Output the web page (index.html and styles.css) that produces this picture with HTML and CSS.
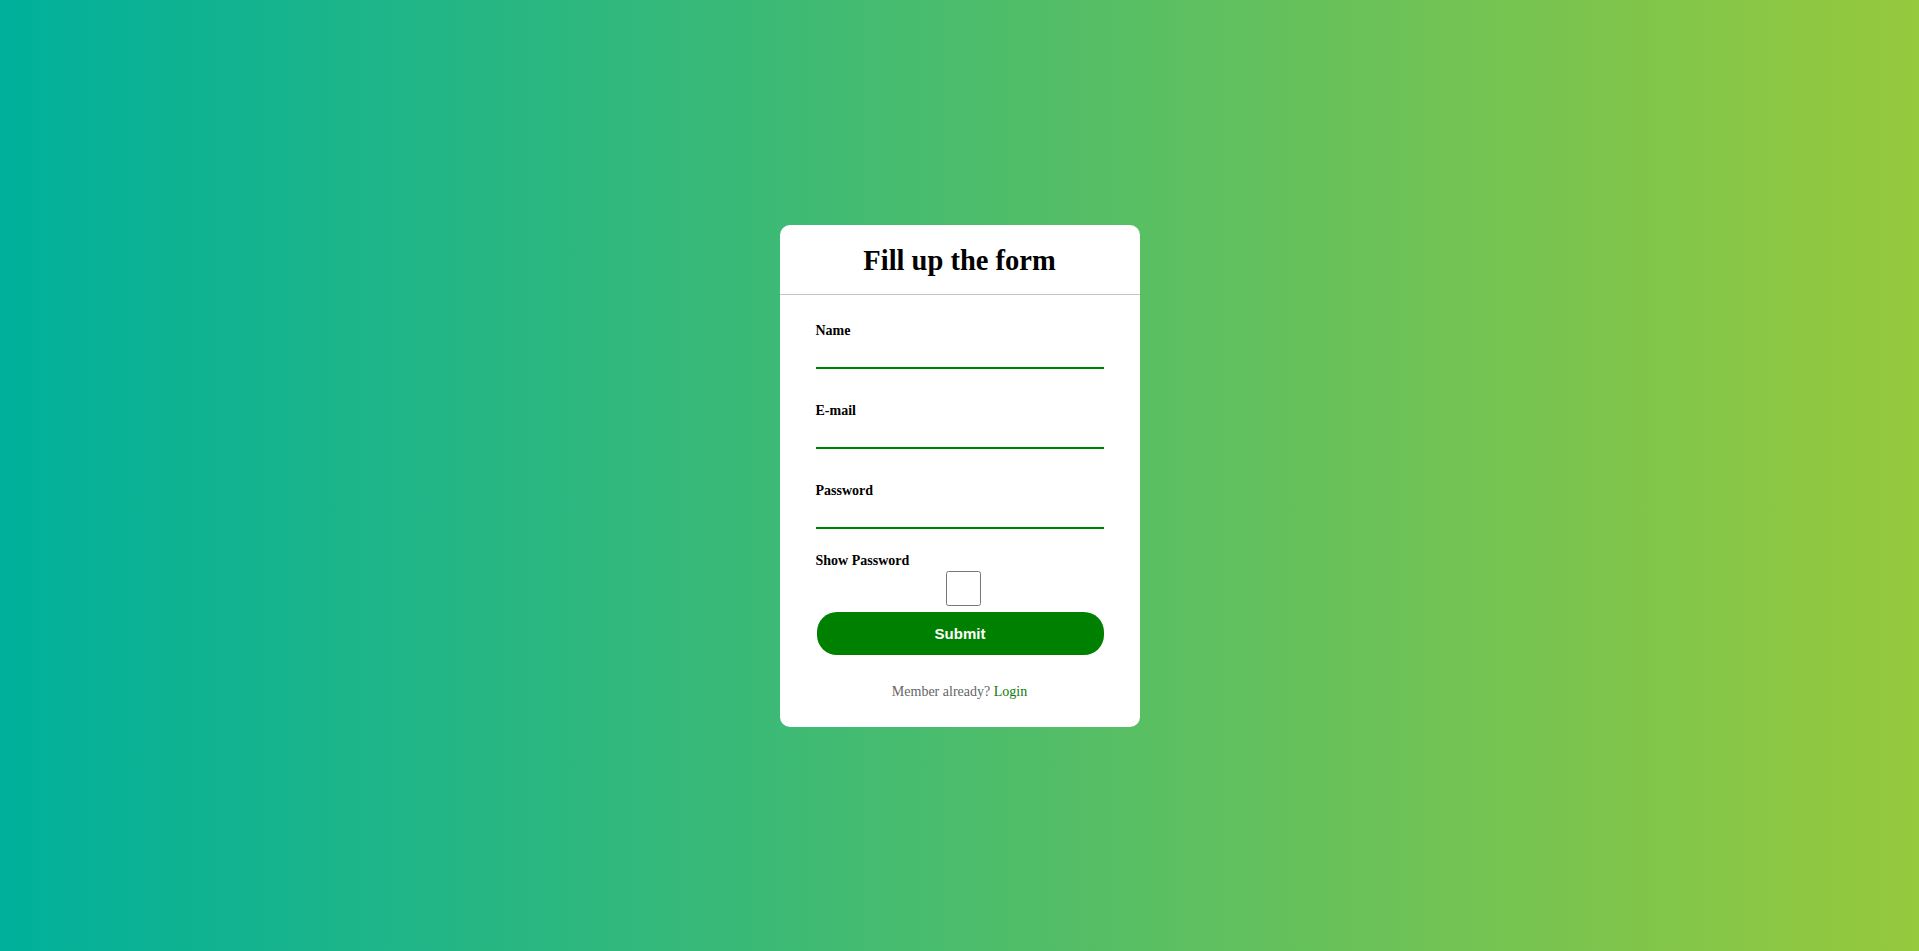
FILE: index.html
```html
<!DOCTYPE html>
<html lang="en">
<head>
<meta charset="utf-8">
<title>Fill up the form</title>
<link rel="stylesheet" href="styles.css">
</head>
<body>
<div class="card">
  <div class="card-header">
    <h1 class="title">Fill up the form</h1>
  </div>
  <form class="form">
    <div class="field">
      <label class="label" for="name">Name</label>
      <input class="input" id="name" type="text">
    </div>
    <div class="field">
      <label class="label" for="email">E-mail</label>
      <input class="input" id="email" type="email">
    </div>
    <div class="field">
      <label class="label" for="password">Password</label>
      <input class="input" id="password" type="password">
    </div>
    <div class="show">
      <label class="label" for="show">Show Password</label>
      <input class="checkbox" id="show" type="checkbox">
    </div>
    <button class="submit" type="button">Submit</button>
    <p class="member">Member already? <a class="login" href="#">Login</a></p>
  </form>
</div>
</body>
</html>
```
FILE: styles.css
```css
html, body {
  margin: 0;
  padding: 0;
}
body {
  height: 951px;
  background: linear-gradient(to right, #00b09b, #96c93d);
  display: flex;
  align-items: center;
  justify-content: center;
  font-family: "Liberation Serif", "Times New Roman", serif;
}
.card {
  width: 360px;
  background: #fff;
  border-radius: 10px;
  margin-top: 1px;
}
.card-header {
  height: 70px;
  box-sizing: border-box;
  padding-top: 2px;
  display: flex;
  align-items: center;
  justify-content: center;
  border-bottom: 1px solid #c4c4c4;
}
.title {
  margin: 0;
  font-size: 28.5px;
  font-weight: bold;
  color: #000;
}
.form {
  padding: 26px 36px 0;
}
.field {
  margin-bottom: 32px;
}
.field .label {
  padding-top: 2px;
}
.field:nth-child(3) {
  margin-bottom: 24px;
}
.label {
  display: block;
  font-size: 14px;
  line-height: 16px;
  font-weight: bold;
  color: #000;
}
.input {
  display: block;
  box-sizing: border-box;
  width: 100%;
  height: 30px;
  border: none;
  border-bottom: 2px solid #008000;
  outline: none;
  background: transparent;
  padding: 0;
  font-family: inherit;
}
.show {
  display: block;
}
.checkbox {
  display: block;
  width: 35px;
  height: 35px;
  margin: 2px 0 6px 130px;
}
.submit {
  display: block;
  width: 287px;
  height: 43px;
  margin-left: 1px;
  border: none;
  border-radius: 20px;
  background: #008000;
  color: #fff;
  font-family: "Liberation Sans", Arial, sans-serif;
  font-size: 15px;
  font-weight: bold;
  cursor: pointer;
}
.member {
  margin: 29px 0 0;
  padding-bottom: 27px;
  text-align: center;
  font-size: 14px;
  line-height: 16px;
  color: #666;
}
.login {
  color: #0a7a0a;
  text-decoration: none;
}
```
